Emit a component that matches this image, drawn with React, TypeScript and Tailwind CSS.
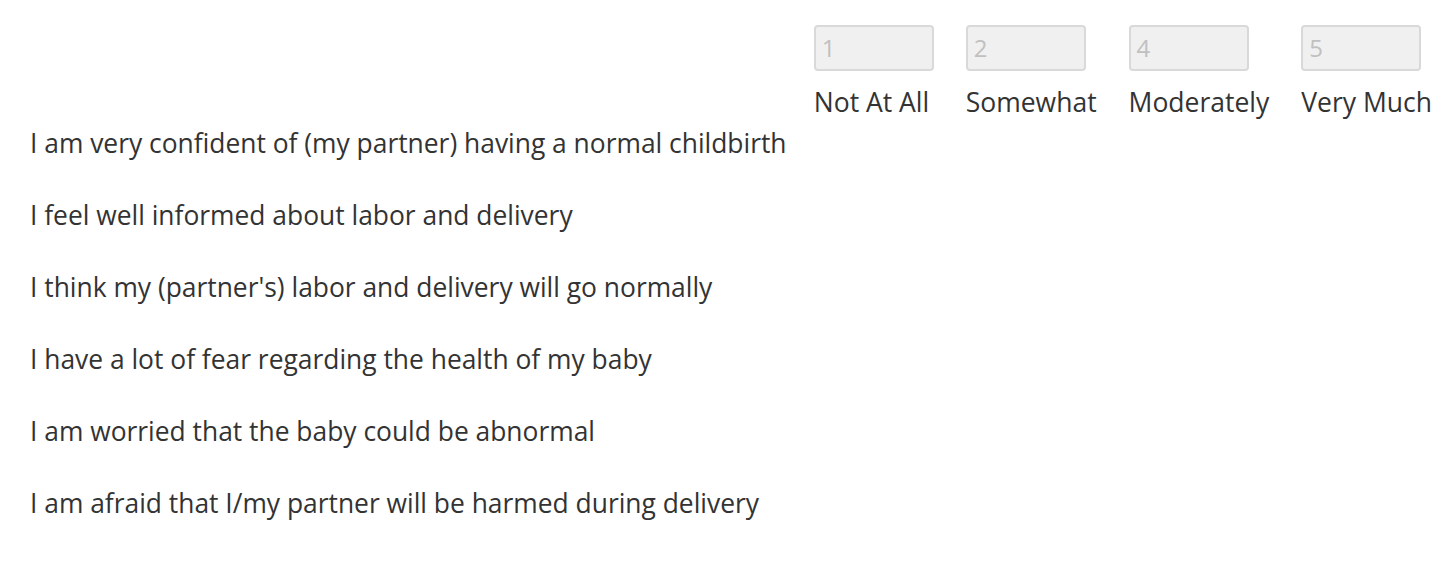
import React from 'react'

const scale = [
  { value: '1', label: 'Not At All' },
  { value: '2', label: 'Somewhat' },
  { value: '4', label: 'Moderately' },
  { value: '5', label: 'Very Much' },
]

const statements = [
  'I am very confident of (my partner) having a normal childbirth',
  'I feel well informed about labor and delivery',
  "I think my (partner's) labor and delivery will go normally",
  'I have a lot of fear regarding the health of my baby',
  'I am worried that the baby could be abnormal',
  'I am afraid that I/my partner will be harmed during delivery',
]

export default function App() {
  return (
    <div className="w-[1456px] h-[564px] bg-white text-[#333333] font-['Open_Sans',sans-serif] overflow-hidden">
      <div className="flex justify-end pt-[25px] pr-[24px] gap-8">
        {scale.map((s) => (
          <div key={s.value} className="flex flex-col min-w-[120px]">
            <div className="w-[120px] h-[46px] rounded-[4px] border-2 border-[#d9d9d9] bg-[#f0f0f0] px-[6px] flex items-center text-[24px] text-[#c0c0c0]">
              {s.value}
            </div>
            <div className="mt-[15px] text-[26.5px] leading-[32px] whitespace-nowrap">{s.label}</div>
          </div>
        ))}
      </div>
      <div className="pl-[30px] flex flex-col gap-[40px] mt-[9px]">
        {statements.map((t) => (
          <div key={t} className="text-[26.4px] leading-[32px]">
            {t}
          </div>
        ))}
      </div>
    </div>
  )
}
